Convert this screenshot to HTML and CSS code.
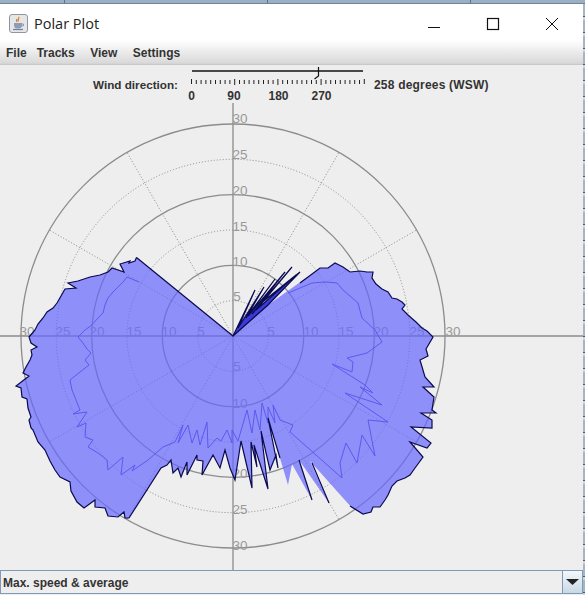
FILE: index.html
```html
<!DOCTYPE html>
<html lang="en">
<head>
<meta charset="utf-8">
<title>Polar Plot</title>
<link rel="stylesheet" href="styles.css">
</head>
<body>
<div class="desk-top"></div>
<div class="main">
  <div class="window">
    <div class="chrome">
      <header class="titlebar">
        <svg class="app-icon" width="20" height="20" viewBox="0 0 20 20">
          <rect x="0.5" y="0.5" width="18" height="18" rx="2.5" fill="#e6e6e6" stroke="#8c97a3"/>
          <path d="M9.5 3c1.500 1.500-1.500 2.500 0 4.500M7.500 5c.8 1-.6 1.600.4 2.800" fill="none" stroke="#d9803a" stroke-width="1.300"/>
          <path d="M5 9h8v3a3 3 0 0 1-3 2.500H8A3 3 0 0 1 5 12z" fill="#8f9cb5"/>
          <path d="M13 10h1.500v1.800H13" fill="none" stroke="#8f9cb5"/>
          <path d="M4 15.500h10" stroke="#6f7f9e" stroke-width="1.200"/>
        </svg>
        <span class="title">Polar Plot</span>
        <div class="win-buttons">
          <svg class="win-btn" width="46" height="16" viewBox="0 0 46 16"><path d="M17 11.500h12" stroke="#111" stroke-width="1"/></svg>
          <svg class="win-btn" width="46" height="16" viewBox="0 0 46 16"><rect x="17.500" y="2.500" width="11" height="11" fill="none" stroke="#111" stroke-width="1.200"/></svg>
          <svg class="win-btn" width="46" height="16" viewBox="0 0 46 16"><path d="M17 2l12 12M29 2L17 14" stroke="#111" stroke-width="1" fill="none"/></svg>
        </div>
      </header>
      <nav class="menubar">
        <span class="menu-item">File</span>
        <span class="menu-item">Tracks</span>
        <span class="menu-item">View</span>
        <span class="menu-item">Settings</span>
      </nav>
    </div>
    <section class="controls">
      <span class="wind-label">Wind direction:</span>
      <svg class="slider" width="176" height="32" viewBox="190 67 176 32">
        <path d="M192 71H363" stroke="#111" stroke-width="1.400"/>
        <path d="M191.500 79v5M196.300 80v4M201.100 80v4M205.900 80v4M210.700 80v4M215.500 80v4M220.300 80v4M225.100 80v4M229.900 80v4M234.700 79v6M239.500 80v4M244.300 80v4M249.100 80v4M253.900 80v4M258.700 80v4M263.500 80v4M268.300 80v4M273.100 80v4M277.900 79v6M282.700 80v4M287.500 80v4M292.300 80v4M297.100 80v4M301.900 80v4M306.700 80v4M311.500 80v4M316.300 80v4M321.100 79v6M325.900 80v4M330.700 80v4M335.500 80v4M340.300 80v4M345.100 80v4M349.900 80v4M354.700 80v4M359.500 80v4M364.300 79v5" stroke="#222" stroke-width="1"/>
        <path d="M318.500 67v9l-4 3" fill="none" stroke="#111" stroke-width="1.200"/>
        <text class="tick-label" x="191.500" y="100" text-anchor="middle">0</text>
        <text class="tick-label" x="234" y="100" text-anchor="middle">90</text>
        <text class="tick-label" x="278.500" y="100" text-anchor="middle">180</text>
        <text class="tick-label" x="321.500" y="100" text-anchor="middle">270</text>
      </svg>
      <span class="wind-value">258 degrees (WSW)</span>
    </section>
    <svg class="plot" width="583" height="467" viewBox="0 103 583 467">
      <g class="spokes">
        <path d="M233 336L127 152.400M233 336L339 152.400M233 336L49.400 230M233 336L416.600 230M233 336L49.400 442M233 336L416.600 442M233 336L127 519.600M233 336L339 519.600"/>
      </g>
      <g class="rings-dotted">
        <circle cx="233" cy="336" r="35.300"/>
        <circle cx="233" cy="336" r="106"/>
        <circle cx="233" cy="336" r="176.700"/>
      </g>
      <g class="rings">
        <circle cx="233" cy="336" r="70.700"/>
        <circle cx="233" cy="336" r="141.300"/>
        <circle cx="233" cy="336" r="212"/>
        <path d="M0 336H583M233 103V570"/>
      </g>
      <g class="axis-labels">
        <text x="27" y="336">30</text><text x="63" y="336">25</text><text x="97" y="336">20</text><text x="134" y="336">15</text><text x="169" y="336">10</text><text x="201" y="336">5</text>
        <text x="271" y="336">5</text><text x="311" y="336">10</text><text x="346" y="336">15</text><text x="381" y="336">20</text><text x="417" y="336">25</text><text x="453" y="336">30</text>
        <text x="240" y="123">30</text><text x="240" y="159">25</text><text x="240" y="195">20</text><text x="240" y="231">15</text><text x="240" y="266">10</text><text x="237" y="301">5</text>
        <text x="237" y="371">5</text><text x="240" y="408">10</text><text x="240" y="478">20</text><text x="240" y="514">25</text><text x="240" y="550">30</text>
      </g>
      <path class="max-area" d="M233 336L136.500 257.500L135 261L129 263L130 261L120 264L124 272L112 268L108 272L100 275L90 277L84 279L78 281L68 283L76 288L65 289L61 296L57 303L53 308L47 312L43 318L38 324L35 330L29 337L31 343L37 347L31 350L32 355L30 360L26 367L23 373L29 376L16 386L21 388L22 397L27 399L28 408L31 417L29 420L31 428L33 430L38 442L45 450L50 461L55 470L60 477L70 482L71 491L77 502L84 508L95 500L95 507L105 508L108 516L118 517L124 512L125 518L129 518L161 468L167 465L171 460L173 473L178 468L181 477L187 462L187 475L197 455L197 460L203 461L202 475L213 455L220 468L225 450L230 468L235 480L241 441L252 488L251 442L257 467L254 445L268 489L261 431L270 470L276 455L278 468L268 418L288 485L292 464L312 500L299 460L329 503L310 461L352 508L363 514L371 512L373 507L380 507L385 500L388 495L392 486L397 481L405 478L410 475L415 468L423 457L410 442L427 448L431 443L411 427L432 428L432 420L421 413L436 413L432 410L434 397L423 387L434 387L425 377L420 360L428 356L426 349L433 337L427 331L422 328L416 322L408 315L402 309L405 305L402 302L397 299L392 298L388 292L382 289L376 284L372 278L373 272L367 272L360 271L350 272L343 267L335 263L328 268L320 268L268 305Z"/>
      <path class="spike-fill" d="M233 336L255 290L238 328L259 295L240 325L264 287L246 318L275 279L248 316L285 272L252 314L292 267L256 310L296 275L260 304L300 272L268 305Z"/>
      <path class="avg-line" d="M139 282L127 277L123 282L113 292L108 298L105 305L103 313L97 319L92 325L85 330L78 337L83 343L87 349L91 353L85 360L89 365L80 372L70 380L72 390L76 400L80 410L73 414L87 412L77 427L86 423L85 437L93 440L88 447L98 453L107 460L108 470L123 457L121 475L135 465L132 471L148 460L163 447L175 442L183 425L178 443L188 425L192 443L197 430L200 445L207 422L208 448L217 438L221 441L227 430L232 443L232 430L238 441L247 410L252 433L255 410L260 430L262 403L268 423L268 407L275 423L273 405L280 420L293 425L290 432L342 478L340 463L346 443L357 463L362 435L375 456L368 420L388 422L345 393L382 405L360 387L373 393L365 385L332 364L352 372L353 362L347 358L367 353L382 342L375 330L362 318L358 303L343 290L337 283L325 282L312 283L288 293"/>
      <path class="max-line" d="M136.500 257.500L135 261L129 263L130 261L120 264L124 272L112 268L108 272L100 275L90 277L84 279L78 281L68 283L76 288L65 289L61 296L57 303L53 308L47 312L43 318L38 324L35 330L29 337L31 343L37 347L31 350L32 355L30 360L26 367L23 373L29 376L16 386L21 388L22 397L27 399L28 408L31 417L29 420L31 428L33 430L38 442L45 450L50 461L55 470L60 477L70 482L71 491L77 502L84 508L95 500L95 507L105 508L108 516L118 517L124 512L125 518L129 518L161 468L167 465L171 460L173 473L178 468L181 477L187 462L187 475L197 455L197 460L203 461L202 475L213 455L220 468L225 450L230 468L235 480L241 441L252 488L251 442L257 467L254 445L268 489L261 431L270 470L276 455L278 468L268 418L280 458M299 460L312 500M312 463L329 503M350 506L363 514L371 512L373 507L380 507L385 500L388 495L392 486L397 481L405 478L410 475L415 468L423 457L410 442L427 448L431 443L411 427L432 428L432 420L421 413L436 413L432 410L434 397L423 387L434 387L425 377L420 360L428 356L426 349L433 337L427 331L422 328L416 322L408 315L402 309L405 305L402 302L397 299L392 298L388 292L382 289L376 284L372 278L373 272L367 272L360 271L350 272L343 267L335 263L328 268L320 268L300 283M136.500 257.500L233 336L255 290L238 328L259 295L240 325L264 287L246 318L275 279L248 316L285 272L252 314L292 267L256 310L296 275L260 304L300 272L268 305L233 336"/>
    </svg>
    <div class="combo">
      <span class="combo-text">Max. speed &amp; average</span>
      <div class="combo-btn"><svg width="13" height="6" viewBox="0 0 13 6"><path d="M0 0H13L6.500 6Z" fill="#222"/></svg></div>
    </div>
  </div>
  <div class="desk-right"></div>
</div>
</body>
</html>
```
FILE: styles.css
```css
* { box-sizing: border-box; }
html, body { margin: 0; padding: 0; }
body {
  width: 585px;
  height: 595px;
  overflow: hidden;
  background: #eeeeee;
  font-family: "Liberation Sans", Arial, sans-serif;
  color: #333;
}
.desk-top {
  height: 4px;
  background-color: #9db0c3;
  background-image: repeating-linear-gradient(90deg, transparent 0 64px, #5d7388 64px 65px, transparent 65px 101.500px);
  border-bottom: 1px solid #6f8499;
}
.main { display: flex; height: 591px; }
.window { width: 583px; display: flex; flex-direction: column; background: #eeeeee; }
.desk-right {
  width: 2px;
  background-color: #a8b6c3;
  background-image: repeating-linear-gradient(180deg, #a8b6c3 0 12px, #4d5a68 12px 13px, #cfd3d6 13px 16px);
}
.chrome {
  height: 61px;
  display: flex;
  flex-direction: column;
  background: linear-gradient(180deg, #ffffff 0 36px, #d9d9d9 59px, #d0d0d0 60px);
  border-bottom: 1px solid #c8c8c8;
}
.titlebar { height: 37px; display: flex; align-items: center; padding: 2px 8px 0 9px; }
.app-icon { flex: none; }
.title { margin-left: 5px; font: 14.500px "Open Sans", sans-serif; color: #222; }
.win-buttons { margin-left: auto; display: flex; gap: 13px; }
.win-btn { display: block; }
.menubar { display: flex; padding: 5px 0 0 6px; font-size: 12px; font-weight: bold; color: #333; }
.menu-item { margin-right: 15.500px; }
.menu-item:first-child { margin-right: 10px; }
.controls { height: 38px; display: flex; align-items: flex-start; padding-left: 93px; font-size: 12px; font-weight: bold; color: #333; }
.wind-label { margin-top: 13px; width: 97px; font-size: 11.700px; }
.slider { display: block; margin-top: 2px; flex: none; overflow: visible; }
.tick-label { font-size: 12px; font-weight: bold; fill: #333; }
.wind-value { margin-top: 13px; margin-left: 8px; letter-spacing: 0.200px; }
.plot { display: block; flex: none; }
.spokes path { fill: none; stroke: #8a8a8a; stroke-width: 1; stroke-dasharray: 1 2; }
.rings-dotted circle { fill: none; stroke: #8a8a8a; stroke-width: 1; stroke-dasharray: 1 2; }
.rings circle, .rings path { fill: none; stroke: #8c8c8c; stroke-width: 1.300; }
.axis-labels text { font-size: 13.500px; fill: #999; text-anchor: middle; }
.max-area { fill: #6666ff; fill-opacity: 0.7; stroke: none; }
.spike-fill { fill: #3a3ad8; stroke: none; }
.avg-line { fill: none; stroke: #5a5af0; stroke-width: 1; }
.max-line { fill: none; stroke: #0a0a50; stroke-width: 1.200; stroke-linejoin: miter; }
.combo {
  height: 24px;
  display: flex;
  align-items: center;
  justify-content: space-between;
  padding-left: 2px;
  background: #eeeeee;
  border: 1px solid #7e9ab8;
  font-size: 12px;
  font-weight: bold;
  color: #333;
}
.combo-text { padding-top: 1px; }
.combo-btn {
  width: 20px;
  height: 100%;
  display: flex;
  align-items: center;
  justify-content: center;
  border-left: 1px solid #7e9ab8;
  background: linear-gradient(180deg, #f4f7fa, #c8d8e6);
}
```
